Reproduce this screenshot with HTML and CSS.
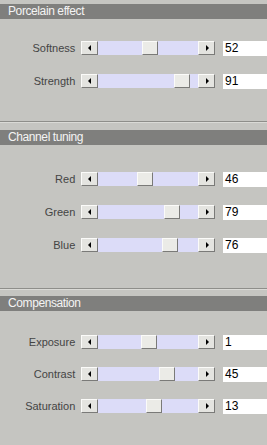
FILE: index.html
```html
<!DOCTYPE html>
<html lang="en">
  <head>
    <meta charset="UTF-8" />
    <meta name="viewport" content="width=device-width, initial-scale=1.0" />
    <title>Porcelain effect</title>
    <link rel="stylesheet" href="styles.css">
  </head>

  <body>
    <div class="panel">
      <!-- Porcelain effect -->
      <section class="group g1">
        <h2 class="group-title">Porcelain effect</h2>
        <div class="rows">
          <div class="row">
            <span class="row-label">Softness</span>
            <div class="slider">
              <span class="arrow arrow-left"></span>
              <span class="track"><span class="thumb" style="left: calc((100% - 16px) * 0.52)"></span></span>
              <span class="arrow arrow-right"></span>
            </div>
            <span class="value">52</span>
          </div>
          <div class="row">
            <span class="row-label">Strength</span>
            <div class="slider">
              <span class="arrow arrow-left"></span>
              <span class="track"><span class="thumb" style="left: calc((100% - 16px) * 0.91)"></span></span>
              <span class="arrow arrow-right"></span>
            </div>
            <span class="value">91</span>
          </div>
        </div>
      </section>

      <!-- Channel tuning -->
      <section class="group g2">
        <h2 class="group-title">Channel tuning</h2>
        <div class="rows">
          <div class="row">
            <span class="row-label">Red</span>
            <div class="slider">
              <span class="arrow arrow-left"></span>
              <span class="track"><span class="thumb" style="left: calc((100% - 16px) * 0.46)"></span></span>
              <span class="arrow arrow-right"></span>
            </div>
            <span class="value">46</span>
          </div>
          <div class="row">
            <span class="row-label">Green</span>
            <div class="slider">
              <span class="arrow arrow-left"></span>
              <span class="track"><span class="thumb" style="left: calc((100% - 16px) * 0.79)"></span></span>
              <span class="arrow arrow-right"></span>
            </div>
            <span class="value">79</span>
          </div>
          <div class="row">
            <span class="row-label">Blue</span>
            <div class="slider">
              <span class="arrow arrow-left"></span>
              <span class="track"><span class="thumb" style="left: calc((100% - 16px) * 0.76)"></span></span>
              <span class="arrow arrow-right"></span>
            </div>
            <span class="value">76</span>
          </div>
        </div>
      </section>

      <!-- Compensation (range -100..100) -->
      <section class="group g3">
        <h2 class="group-title">Compensation</h2>
        <div class="rows">
          <div class="row">
            <span class="row-label">Exposure</span>
            <div class="slider">
              <span class="arrow arrow-left"></span>
              <span class="track"><span class="thumb" style="left: calc((100% - 16px) * 0.505)"></span></span>
              <span class="arrow arrow-right"></span>
            </div>
            <span class="value">1</span>
          </div>
          <div class="row">
            <span class="row-label">Contrast</span>
            <div class="slider">
              <span class="arrow arrow-left"></span>
              <span class="track"><span class="thumb" style="left: calc((100% - 16px) * 0.725)"></span></span>
              <span class="arrow arrow-right"></span>
            </div>
            <span class="value">45</span>
          </div>
          <div class="row">
            <span class="row-label">Saturation</span>
            <div class="slider">
              <span class="arrow arrow-left"></span>
              <span class="track"><span class="thumb" style="left: calc((100% - 16px) * 0.565)"></span></span>
              <span class="arrow arrow-right"></span>
            </div>
            <span class="value">13</span>
          </div>
        </div>
      </section>
    </div>
  </body>
</html>
```

FILE: styles.css
```css
html, body, h2{
  margin: 0;
  padding: 0;
}

body{
  background-color: #c5c5c1;
  font-family: "Liberation Sans", Arial, sans-serif;
  overflow: hidden;
}

.panel{
  width: 267px;
  height: 445px;
}

/* section box */
.group{
  display: flex;
  flex-direction: column;
}

.g1{
  padding: 4px 0 33px;
}

.g2, .g3{
  border-top: 1px solid #8e8e8a;
  box-shadow: inset 0 1px 0 #dadad6;
}

.g2{
  padding: 8px 0 36px;
}

.g3{
  padding: 7px 0 0;
}

.group-title{
  height: 15px;
  padding-left: 8px;
  background-color: #7f7f7d;
  color: #f4f4f4;
  font: normal 12px/15px "Liberation Sans", Arial, sans-serif;
  letter-spacing: -0.4px;
}

.rows{
  display: flex;
  flex-direction: column;
  gap: 19px;
}

.g1 .rows{
  margin-top: 22px;
}

.g2 .rows{
  margin-top: 27px;
}

.g3 .rows{
  margin-top: 24px;
  gap: 18px;
}

.row{
  display: flex;
  align-items: center;
  height: 14px;
}

.row-label{
  width: 82px;
  padding-right: 6px;
  box-sizing: border-box;
  text-align: right;
  font-size: 11px;
  color: #444;
}

/* scrollbar-like slider */
.slider{
  display: flex;
  width: 135px;
  height: 14px;
}

.arrow, .thumb{
  box-sizing: border-box;
  background-color: #e4e4e0;
  border-top: 1px solid #fbfbf9;
  border-left: 1px solid #fbfbf9;
  border-right: 1px solid #7a7a78;
  border-bottom: 1px solid #7a7a78;
}

.arrow{
  position: relative;
  width: 17px;
  flex: none;
}

.arrow::before{
  content: '';
  position: absolute;
  top: 3px;
  left: 6px;
  border-top: 3px solid transparent;
  border-bottom: 3px solid transparent;
}

.arrow-left::before{
  border-right: 3px solid #000;
}

.arrow-right::before{
  left: 7px;
  border-left: 3px solid #000;
}

.track{
  position: relative;
  flex: 1;
  background-color: #dcdcf8;
}

.thumb{
  position: absolute;
  top: 0;
  width: 16px;
  height: 14px;
  background-color: #ebebe7;
}

.value{
  flex: none;
  width: 44px;
  height: 15px;
  margin-left: 8px;
  padding-left: 2px;
  box-sizing: border-box;
  background-color: #fff;
  font-size: 12px;
  line-height: 15px;
  color: #000;
}
```
